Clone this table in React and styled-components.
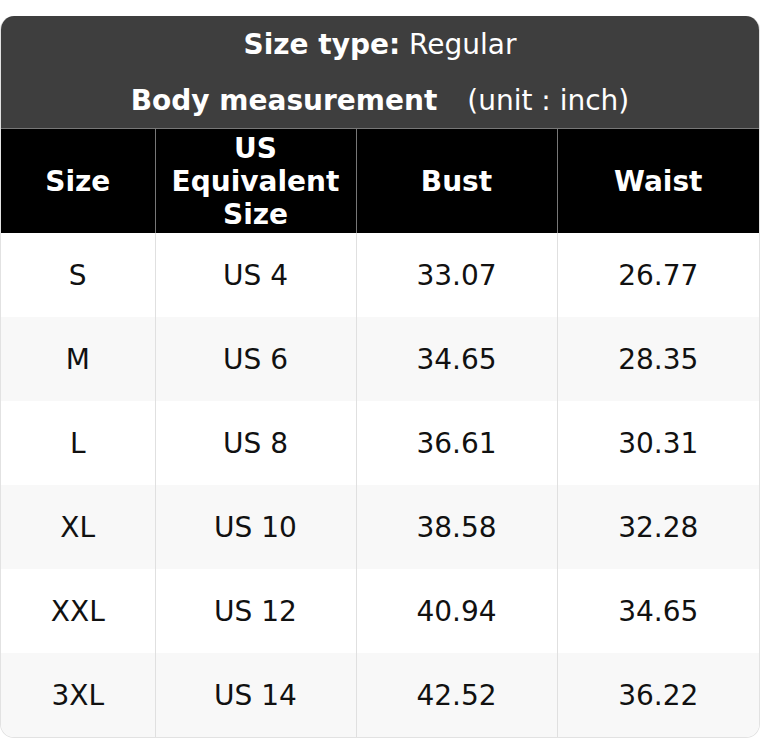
import React from "react";
import styled, { createGlobalStyle } from "styled-components";

const Global = createGlobalStyle`
  html, body { margin: 0; padding: 0; background: #fff; }
  body { font-family: "DejaVu Sans", "Liberation Sans", sans-serif; }
`;

const Page = styled.div`
  padding-top: 16px;
`;

const Card = styled.div`
  border-radius: 14px;
  overflow: hidden;
  border: 1px solid #e2e2e2;
  border-top: none;
  background: #fff;
`;

const Banner = styled.div`
  background: #3e3e3e;
  color: #fff;
  display: flex;
  flex-direction: column;
`;

const BannerLine = styled.div`
  height: 56px;
  display: flex;
  align-items: center;
  justify-content: center;
  font-size: 28px;
  white-space: pre;
  padding-top: 1px;
  box-sizing: border-box;
`;

const Strong = styled.span`
  font-weight: bold;
`;

const Unit = styled.span`
  margin-left: 30px;
`;

const Table = styled.table`
  width: 100%;
  border-collapse: collapse;
  table-layout: fixed;
`;

const HeadCell = styled.th`
  background: #000;
  color: #fff;
  font-size: 28px;
  font-weight: bold;
  line-height: 33px;
  height: 104px;
  padding: 2px 4px 0;
  border: 1px solid #777;
  border-bottom: none;
  box-sizing: border-box;
  text-align: center;
  &:first-child { border-left: none; }
  &:last-child { border-right: none; }
`;

const Row = styled.tr`
  background: ${(p) => (p.$alt ? "#f8f8f8" : "#fff")};
`;

const Cell = styled.td`
  height: 84px;
  padding: 2px 0 0;
  font-size: 28px;
  color: #111;
  text-align: center;
  border-left: 1px solid #e0e0e0;
  box-sizing: border-box;
  &:first-child { border-left: none; }
`;

const rows = [
  ["S", "US 4", "33.07", "26.77"],
  ["M", "US 6", "34.65", "28.35"],
  ["L", "US 8", "36.61", "30.31"],
  ["XL", "US 10", "38.58", "32.28"],
  ["XXL", "US 12", "40.94", "34.65"],
  ["3XL", "US 14", "42.52", "36.22"],
];

export default function App() {
  return (
    <Page>
      <Global />
      <Card>
        <Banner>
          <BannerLine>
            <Strong>Size type:</Strong> Regular
          </BannerLine>
          <BannerLine>
            <Strong>Body measurement</Strong> <Unit>(unit : inch)</Unit>
          </BannerLine>
        </Banner>
        <Table>
          <colgroup>
            <col style={{ width: "154px" }} />
            <col style={{ width: "201px" }} />
            <col style={{ width: "201px" }} />
            <col />
          </colgroup>
          <thead>
            <tr>
              <HeadCell>Size</HeadCell>
              <HeadCell>
                US
                <br />
                Equivalent
                <br />
                Size
              </HeadCell>
              <HeadCell>Bust</HeadCell>
              <HeadCell>Waist</HeadCell>
            </tr>
          </thead>
          <tbody>
            {rows.map((r, i) => (
              <Row key={r[0]} $alt={i % 2 === 1}>
                {r.map((v, j) => (
                  <Cell key={j}>{v}</Cell>
                ))}
              </Row>
            ))}
          </tbody>
        </Table>
      </Card>
    </Page>
  );
}
